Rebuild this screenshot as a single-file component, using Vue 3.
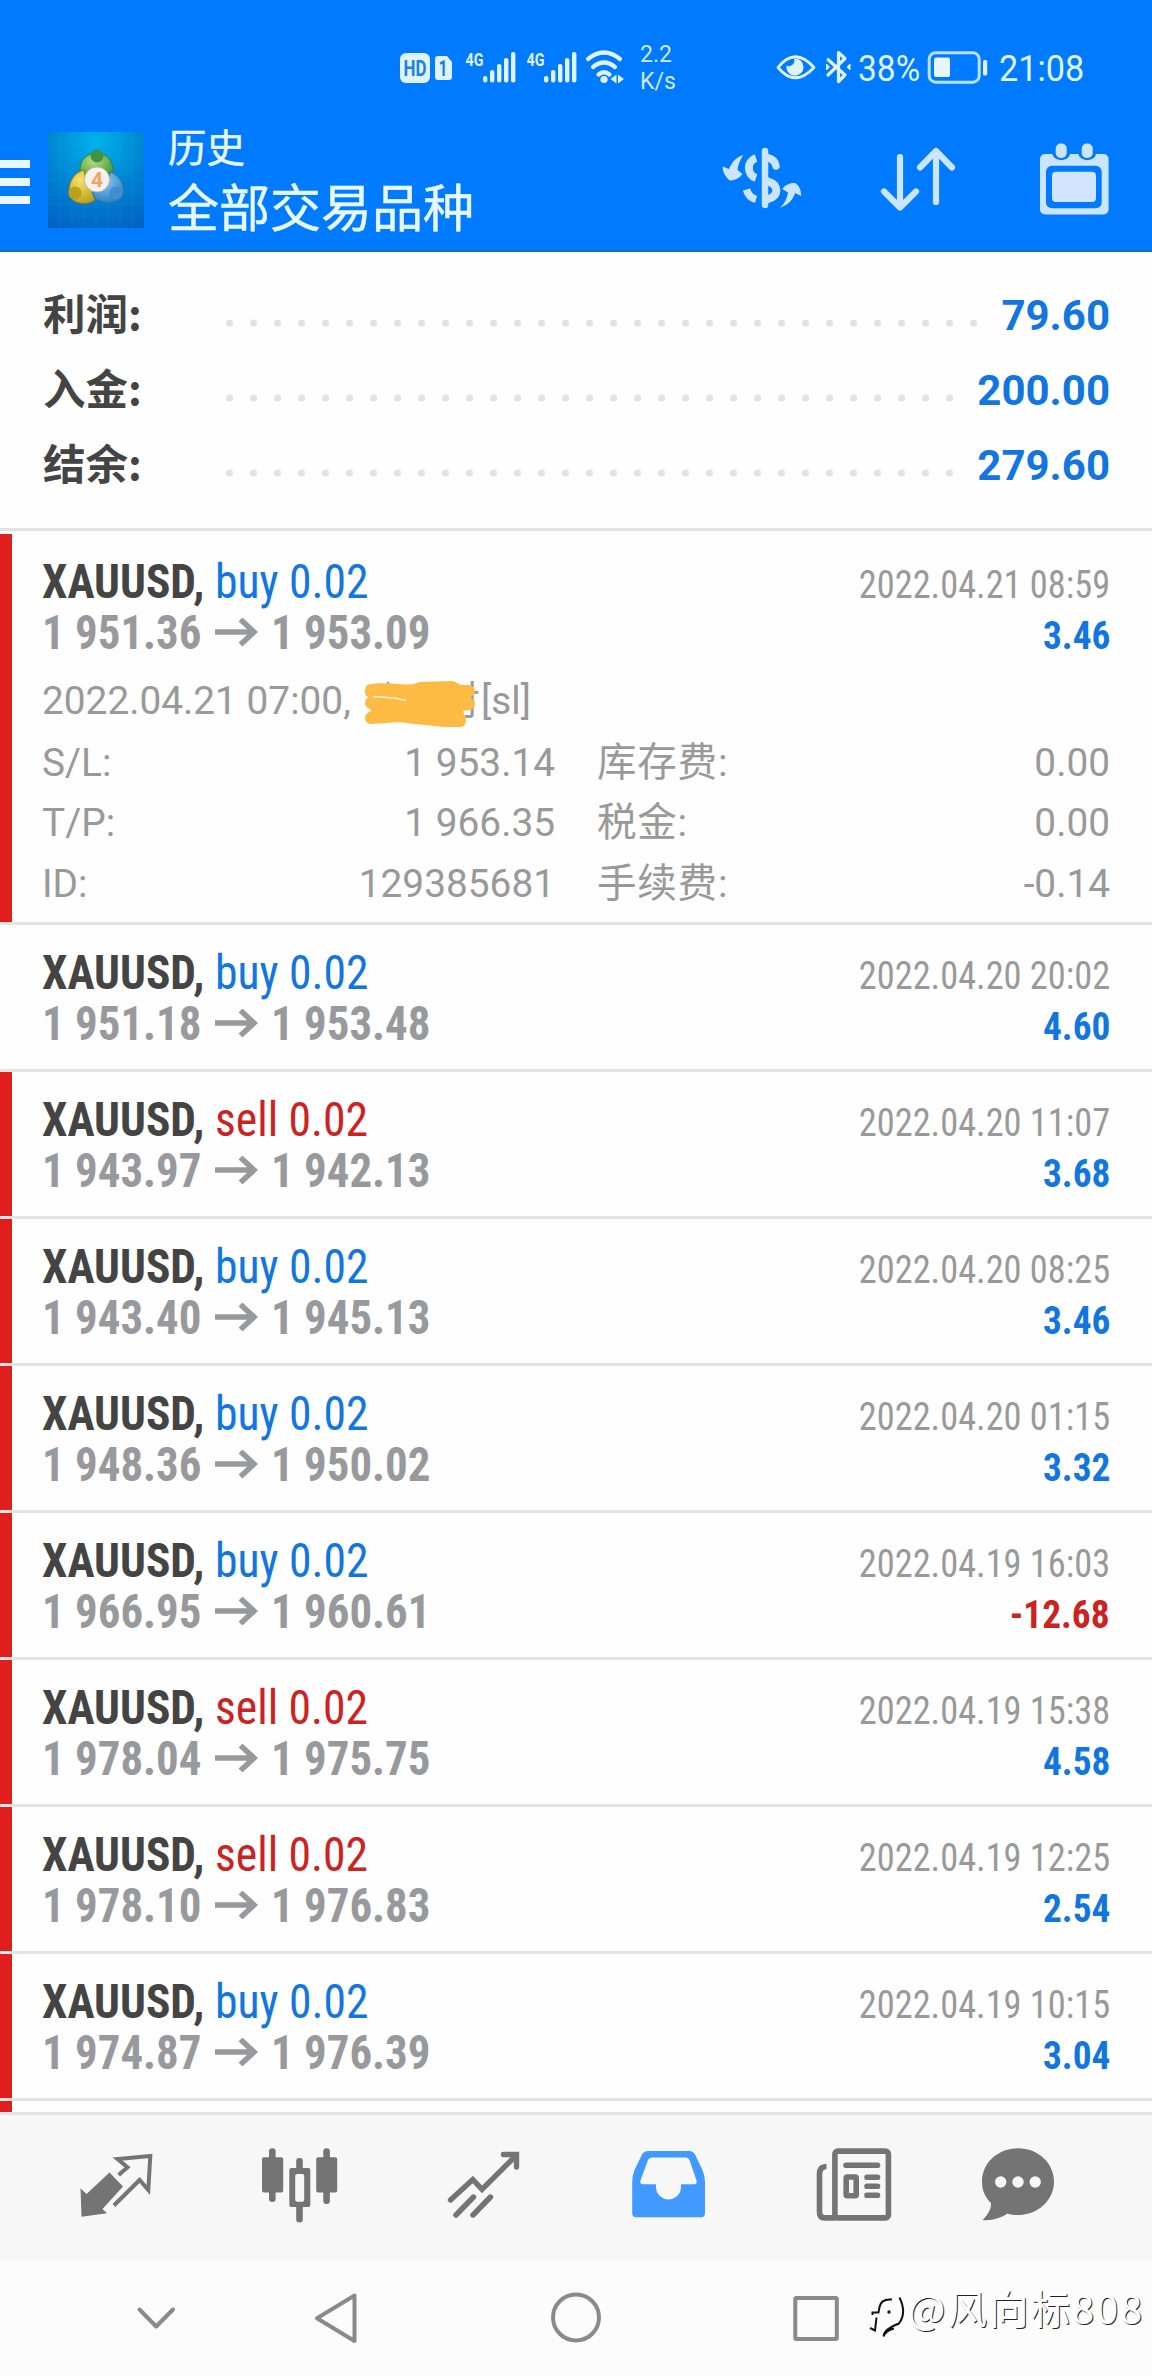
<script setup>
const summary = [
  { label: '利润:', value: '79.60', dots: 32 },
  { label: '入金:', value: '200.00', dots: 31 },
  { label: '结余:', value: '279.60', dots: 31 },
]

const deals = [
  {
    side: 'buy', open: '1 951.36', close: '1 953.09', time: '2022.04.21 08:59', profit: '3.46', marked: true,
    detail: {
      opened: '2022.04.21 07:00,',
      rows: [
        ['S/L:', '1 953.14', '库存费:', '0.00'],
        ['T/P:', '1 966.35', '税金:', '0.00'],
        ['ID:', '129385681', '手续费:', '-0.14'],
      ],
    },
  },
  { side: 'buy', open: '1 951.18', close: '1 953.48', time: '2022.04.20 20:02', profit: '4.60', marked: false },
  { side: 'sell', open: '1 943.97', close: '1 942.13', time: '2022.04.20 11:07', profit: '3.68', marked: true },
  { side: 'buy', open: '1 943.40', close: '1 945.13', time: '2022.04.20 08:25', profit: '3.46', marked: true },
  { side: 'buy', open: '1 948.36', close: '1 950.02', time: '2022.04.20 01:15', profit: '3.32', marked: true },
  { side: 'buy', open: '1 966.95', close: '1 960.61', time: '2022.04.19 16:03', profit: '-12.68', marked: true },
  { side: 'sell', open: '1 978.04', close: '1 975.75', time: '2022.04.19 15:38', profit: '4.58', marked: true },
  { side: 'sell', open: '1 978.10', close: '1 976.83', time: '2022.04.19 12:25', profit: '2.54', marked: true },
  { side: 'buy', open: '1 974.87', close: '1 976.39', time: '2022.04.19 10:15', profit: '3.04', marked: true },
]
</script>

<template>
  <div class="screen">
    <header class="top">
      <div class="status">
        <svg class="st-left" width="230" height="50" viewBox="395 40 230 50" fill="#dff3ff">
          <rect x="400" y="53" width="30" height="30" rx="6" />
          <path d="M438 56h9l5 6v15q0 3-3 3h-11q-3 0-3-3v-18q0-3 3-3z" />
          <text x="403.5" y="75.5" class="hd" textLength="23" lengthAdjust="spacingAndGlyphs">HD</text>
          <text x="438.5" y="75.5" class="hd" textLength="9" lengthAdjust="spacingAndGlyphs">1</text>
          <g v-for="dx in [0, 61]" :key="dx" :transform="`translate(${dx} 0)`">
            <text x="465.5" y="65.5" class="net" textLength="18" lengthAdjust="spacingAndGlyphs">4G</text>
            <rect x="483" y="76" width="4.4" height="6.5" rx="2" />
            <rect x="490" y="70" width="4.4" height="12.5" rx="2" />
            <rect x="497" y="64" width="4.4" height="18.5" rx="2" />
            <rect x="504" y="58" width="4.4" height="24.5" rx="2" />
            <rect x="511" y="52" width="4.4" height="30.5" rx="2" />
          </g>
          <g fill="none" stroke="#dff3ff" stroke-width="4.2" stroke-linecap="round">
            <path d="M588 59Q604 46 620 59" />
            <path d="M593 67Q604 58 615 67" />
            <path d="M598.5 74.5Q604 70 609.5 74.5" />
          </g>
          <circle cx="604" cy="79.5" r="3.6" />
          <path d="M610.5 79l6-4.5v9zM624 79l-6-4.5v9z" />
        </svg>
        <div class="speed"><span>2.2</span><span>K/s</span></div>
        <svg class="st-right" width="76" height="40" viewBox="775 48 76 40" fill="none" stroke="#dff3ff">
          <path d="M778 67.5Q795 46 814 67.5Q795 88 778 67.5Z" stroke-width="2.8" stroke-linejoin="round" />
          <path d="M794 58.5a8.6 8.6 0 1 1-7.5 7a5.5 5.5 0 0 0 7.500 -7z" fill="#dff3ff" stroke="none" />
          <path d="M828 59.500L845 75L838.500 81.500V52.500L845 58.500L828 75" stroke-width="3.2" stroke-linejoin="round" stroke-linecap="round" />
          <path d="M826.500 64v6l3-3zM850 64v6l-3-3z" fill="#dff3ff" stroke="#dff3ff" />
        </svg>
        <span class="pct">38%</span>
        <svg class="batt" width="62" height="34" viewBox="927 50 62 34">
          <rect x="929.2" y="52.700" width="50" height="29.500" rx="6.5" fill="none" stroke="#b9e2ff" stroke-width="3" />
          <rect x="934" y="57.500" width="16" height="19.500" rx="2" fill="#e6f5ff" />
          <rect x="983" y="60" width="4.200" height="15.500" rx="1.500" fill="#dff3ff" />
        </svg>
        <span class="clock">21:08</span>
      </div>
      <div class="bar">
        <div class="burger"><i></i><i></i><i></i></div>
        <svg class="logo" width="96" height="96" viewBox="48 132 96 96">
          <defs>
            <radialGradient id="lg-bg" cx=".5" cy=".1" r="1"><stop offset="0" stop-color="#00b3ec" /><stop offset=".55" stop-color="#0080cf" /><stop offset="1" stop-color="#0062c4" /></radialGradient>
            <radialGradient id="lg-g" cx=".4" cy=".3" r=".8"><stop offset="0" stop-color="#b9dc7d" /><stop offset="1" stop-color="#2f8f36" /></radialGradient>
            <radialGradient id="lg-y" cx=".4" cy=".3" r=".8"><stop offset="0" stop-color="#f7e36a" /><stop offset="1" stop-color="#b99b14" /></radialGradient>
            <radialGradient id="lg-b" cx=".4" cy=".3" r=".8"><stop offset="0" stop-color="#8cc9f2" /><stop offset="1" stop-color="#1c76bd" /></radialGradient>
          </defs>
          <rect x="48" y="132" width="96" height="96" fill="url(#lg-bg)" />
          <path d="M60 132v96M72 132v96M84 132v96M96 132v96M108 132v96M120 132v96M132 132v96M48 144h96M48 156h96M48 168h96M48 180h96M48 192h96M48 204h96M48 216h96" stroke="#3fb4ee" stroke-opacity=".18" stroke-width=".8" />
          <path d="M80 172C79 160 87 153 97 153C107 153 114 161 113 174L106 180L88 176Z" fill="url(#lg-g)" stroke="#3c7d39" />
          <path d="M84 170C73 173 68 183 69 195C72 203 84 206 94 201L97 190L86 180Z" fill="url(#lg-y)" stroke="#8d7d22" />
          <path d="M110 172C119 174 125 184 124 194C121 204 106 206 95 199L92 192L106 187Z" fill="url(#lg-b)" stroke="#2b6ba3" />
          <circle cx="97" cy="156" r="6.500" fill="#439244" />
          <circle cx="75" cy="193" r="6.500" fill="#b9a11b" />
          <circle cx="116" cy="193" r="6.500" fill="#3d8fd0" />
          <circle cx="97" cy="179.500" r="12.500" fill="#f7f1ec" stroke="#b7b09d" stroke-width=".8" />
          <text x="97" y="187" text-anchor="middle" class="four">4</text>
        </svg>
        <div class="titles"><span class="t1">历史</span><span class="t2">全部交易品种</span></div>
        <div class="actions">
          <svg width="84" height="80" viewBox="720 140 84 80" fill="#cce5ff">
            <g fill="none" stroke="#cce5ff" stroke-width="6.500">
              <path d="M765 151V205" stroke-linecap="round" />
              <path d="M756 158C746.500 161 746.500 175 756 178" stroke-width="8" />
              <path d="M746.500 189.500C748 195 751 198 756 199.500" stroke-width="7.500" />
              <path d="M767 157.500C772 158.500 775 161 776 166" stroke-width="7.500" stroke-linecap="round" />
              <path d="M767 181C779.500 185 779.500 196 767 199.500" stroke-width="8" />
            </g>
            <path d="M743.300 155C740 160 738 165 737.500 170L742.500 174C739 179 733 180.500 729.500 180.500C725 176 722.500 172 722.700 166.500L729 169C732 162 736 157 743.300 155Z" />
            <path d="M780 207.700C788 205 793 200 795 193L801.300 196C801 190 799 185 795 183C790 182.500 785 185 782.300 189L788 192.500C787 199 784 204 780 207.700Z" />
          </svg>
          <svg class="sort" width="80" height="80" viewBox="878 140 80 80" fill="none" stroke="#cce5ff" stroke-width="6.200" stroke-linecap="round" stroke-linejoin="round">
            <path d="M900 157V207M884 191.500L900 207.500L916 191.500M936 202V152M920 167.500L936 151L952 167.500" />
          </svg>
          <svg class="cal" width="72" height="80" viewBox="1038 140 72 80" fill="#cce5ff">
            <rect x="1040" y="154" width="68.600" height="60.500" rx="5" />
            <path d="M1052.500 150V154a8.500 6 0 0 0 17.500 0V150zM1078.500 150V154a8.500 6 0 0 0 17.500 0V150z" fill="#007aff" />
            <rect x="1055.700" y="143.500" width="11" height="14.500" rx="5" />
            <rect x="1081.700" y="143.500" width="11" height="14.500" rx="5" />
            <rect x="1046" y="165.700" width="55.700" height="42.600" rx="6" fill="#007aff" />
            <rect x="1052" y="171.700" width="44" height="30.300" rx="4" fill="#d2e5ff" />
          </svg>
        </div>
      </div>
    </header>

    <section class="summary">
      <div v-for="s in summary" :key="s.label" class="sum">
        <span class="sum-label">{{ s.label }}</span>
        <span class="dots"><i v-for="n in s.dots" :key="n"></i></span>
        <span class="sum-value">{{ s.value }}</span>
      </div>
    </section>

    <main class="deals">
      <article v-for="d in deals" :key="d.time" class="deal" :class="{ marked: d.marked, open: d.detail }">
        <div class="line">
          <span class="sym">XAUUSD,</span><span class="side" :class="d.side">{{ d.side }} 0.02</span>
          <span class="time">{{ d.time }}</span>
        </div>
        <div class="line">
          <span class="price">{{ d.open }}</span>
          <svg class="arrow" width="43" height="28" viewBox="0 0 43 28" fill="none" stroke="#98999c" stroke-width="5.5"><path d="M0 14H39M25.500 1.500L39 14L25.500 26.500" /></svg>
          <span class="price">{{ d.close }}</span>
          <span class="profit" :class="{ loss: d.profit[0] === '-' }">{{ d.profit }}</span>
        </div>
        <div v-if="d.detail" class="detail">
          <div class="opened">
            <span>{{ d.detail.opened }}</span>
            <span class="tail">对</span><span class="sl">[sl]</span>
            <svg class="scribble" width="120" height="56" viewBox="360 677 120 56">
              <path d="M380 684l2 2M387 682l3 3M371 709l5 3" stroke="#999" stroke-width="2" />
              <path d="M371 690C385 687 400 692 415 690L420 688L452 687L460 691L469 691L462 697L469 704L455 706L460 721L445 721L415 718L400 716L371 718L388 708L371 703L390 701L371 692Z" fill="#fdbb43" stroke="#fdbb43" stroke-width="12" stroke-linejoin="round" />
              <path d="M373 696.500L394 698L406 700.500" fill="none" stroke="#fff3d6" stroke-width="1.500" />
            </svg>
          </div>
          <div v-for="r in d.detail.rows" :key="r[0]" class="drow">
            <span class="k">{{ r[0] }}</span><span class="v">{{ r[1] }}</span>
            <span class="k2">{{ r[2] }}</span><span class="v2">{{ r[3] }}</span>
          </div>
        </div>
      </article>
      <div class="peek"></div>
    </main>

    <nav class="tabs">
      <svg width="1152" height="145" viewBox="0 2115 1152 145" fill="#747474">
        <path d="M80.500 2188.300L86.500 2194L109.500 2172.500L123 2186.500L102.500 2209L107 2213.300L81.500 2216.700Z" />
        <path d="M118.700 2175L127.500 2167.300L117.500 2159L150.300 2156L148.300 2190L139.600 2180L113.900 2205.500" fill="none" stroke="#747474" stroke-width="4" />
        <g>
          <rect x="269" y="2148.300" width="6.600" height="53.700" rx="3" /><rect x="262" y="2157.300" width="21.200" height="35.200" rx="2" />
          <rect x="323.300" y="2148.300" width="6.600" height="55.700" rx="3" /><rect x="316.200" y="2157.300" width="21" height="35.200" rx="2" />
          <rect x="296.200" y="2158" width="6.600" height="64.500" rx="3" /><rect x="289.300" y="2168" width="21" height="39" rx="2" />
          <rect x="295.200" y="2174" width="9" height="27.700" rx="2" fill="#f7f7f7" />
        </g>
        <path d="M450.500 2200L472.800 2179.500L482 2189.300L516 2155.500M503.500 2154.500H516.500V2167M456 2215L473.500 2197M473 2215L490.500 2197" fill="none" stroke="#747474" stroke-width="5.400" stroke-linecap="round" />
        <path d="M632.200 2213V2182Q632.200 2176 634.500 2170L642 2154.500Q644 2151 648 2151H689.500Q693 2151 695 2154.500L702.500 2170Q705 2176 705 2182V2213Q705 2217.300 701 2217.300H636Q632.200 2217.300 632.200 2213ZM652 2157.500Q649 2157.500 648 2160L640.500 2180.500Q639.500 2184.300 643 2184.300H656V2187A12.400 12.400 0 0 0 681 2187V2184.300H694Q697.500 2184.300 696.500 2180.500L689.500 2160Q688.500 2157.500 686 2157.500Z" fill="#419aff" fill-rule="evenodd" />
        <g fill="none" stroke="#747474" stroke-width="5.600">
          <rect x="834.900" y="2151.100" width="53.500" height="66.800" rx="3" />
          <path d="M826.500 2166.500Q819.500 2166.500 819.500 2174V2212Q819.500 2217.900 825 2217.900H836" />
          <path d="M846 2165.300H877.500M867 2177.300H877.500M867 2186.300H877.500M867 2195.300H877.500" stroke-linecap="round" />
          <rect x="846.200" y="2177" width="10" height="18.700" rx="1" />
        </g>
        <path d="M1018 2148.300C1038 2148.300 1054 2163 1054 2181.700C1054 2200 1038 2215 1018 2215C1014 2215 1010 2214.500 1007.500 2213.500C1001 2218 992 2221 982.500 2220C988 2215 991.500 2208 991 2203C985 2197.500 982 2190 982 2181.700C982 2163 998 2148.300 1018 2148.300Z" />
        <g fill="#f7f7f7"><circle cx="1000.700" cy="2182" r="5.700" /><circle cx="1018" cy="2182" r="5.700" /><circle cx="1035.200" cy="2182" r="5.700" /></g>
      </svg>
    </nav>

    <footer class="sysnav">
      <svg width="720" height="116" viewBox="130 2260 720 116" fill="none" stroke="#8a8a8a" stroke-width="4" stroke-linejoin="round" stroke-linecap="round">
        <path d="M139.500 2309.500L156.200 2326.500L173 2309.500" />
        <path d="M317 2318.300L354.500 2295.500V2341Z" />
        <circle cx="576" cy="2317.500" r="23" />
        <rect x="795.300" y="2298" width="41.500" height="41" rx="1" />
      </svg>
      <div class="mark">
        <svg width="40" height="46" viewBox="868 2295 40 46" fill="none" stroke="#111" stroke-width="2">
          <path d="M892 2299.500Q881 2298.500 879.500 2307L878.500 2312.500H872.500V2315M876.500 2317.500L875 2330.500L870 2328" />
          <path d="M899.500 2297.500Q907 2313 899 2323.500Q884 2329 883.500 2336.500Q885 2331 894 2328.500" />
          <circle cx="889" cy="2312" r=".7" />
        </svg>
        <span>@风向标808</span>
      </div>
    </footer>
  </div>
</template>

<style>
body { margin: 0; background: #fff; }
</style>

<style scoped>
.screen { width: 1152px; height: 2376px; overflow: hidden; display: flex; flex-direction: column; background: #fefefe; font-family: Roboto, "Noto Sans CJK SC", sans-serif; white-space: nowrap; }
svg { display: block; flex: none; }
.top { height: 252px; box-sizing: border-box; background: #007aff; border-bottom: 2px solid #1a6cc8; color: #e6f8ff; flex: none; }
.status { height: 110px; display: flex; align-items: flex-start; padding-left: 395px; }
.st-left { margin-top: 40px; }
.hd { font: 700 22px Roboto, sans-serif; fill: #1d7fe6; }
.net { font: 700 18px Roboto, sans-serif; }
.speed { width: 36px; margin: 41px 0 0 15px; display: flex; flex-direction: column; font-size: 23px; line-height: 27px; color: #cfeaff; }
.st-right { margin: 48px 0 0 99px; }
.pct, .clock { font-size: 36px; line-height: 40px; margin-top: 49px; color: #dff3ff; transform-origin: left; }
.pct { width: 69px; margin-left: 7px; transform: scaleX(.93); }
.batt { margin-top: 50px; }
.clock { margin-left: 10px; transform: scaleX(.95); }
.bar { height: 140px; display: flex; align-items: flex-start; }
.burger { width: 30px; margin: 50px 18px 0 0; display: flex; flex-direction: column; gap: 10px; }
.burger i { height: 8px; background: #e9f6ff; }
.logo { margin-top: 22px; }
.four { font: 700 21px Roboto, sans-serif; fill: #f0a45c; }
.titles { margin: 13px 0 0 24px; width: 320px; display: flex; flex-direction: column; font-family: "Noto Sans CJK SC", sans-serif; -webkit-text-stroke: .5px #e6f8ff; }
.t1 { font-size: 38.4px; line-height: 44px; }
.t2 { font-size: 51px; line-height: 76px; }
.actions { margin: 30px 0 0 232px; display: flex; }
.sort { margin-left: 74px; }
.cal { margin-left: 80px; }

.summary { height: 279px; box-sizing: border-box; border-bottom: 3px solid #e2e2e2; padding: 22px 42px 0 43px; flex: none; }
.sum { height: 75px; display: flex; align-items: baseline; line-height: 75px; font-size: 42px; font-weight: 700; color: #444; }
.sum-label { width: 183px; font-family: "Noto Sans CJK SC", sans-serif; font-size: 42.5px; }
.dots { display: flex; gap: 17px; transform: translateY(-3.5px); }
.dots i { width: 7px; height: 7px; border-radius: 50%; background: #e2e2e2; }
.sum-value { margin-left: auto; color: #1276e0; }

.deals { flex: none; height: 1578px; padding-top: 3px; overflow: hidden; }
.deal { height: 147px; box-sizing: border-box; border-bottom: 3px solid #e4e4e4; padding: 21.5px 42px 0 42px; background: #fefefe; position: relative; }
.deal.open { height: 391px; }
.marked::before { content: ""; position: absolute; left: 0; top: 0; bottom: 0; width: 12px; background: #e01e1e; }
.line { height: 51px; line-height: 51px; display: flex; align-items: baseline; font-stretch: 75%; font-size: 48px; }
.sym { width: 172.5px; font-weight: 700; color: #444; transform: scaleX(.945); transform-origin: left; }
.side { transform: scaleX(.95); transform-origin: left; }
.buy { color: #1276e0; }
.sell { color: #cc2222; }
.time { margin-left: auto; font-size: 39.5px; color: #999; transform: scaleX(.92); transform-origin: right; }
.price { width: 173px; font-weight: 700; color: #98999c; transform: scaleX(.935); transform-origin: left; }
.arrow { margin-right: 13px; align-self: center; }
.profit { margin-left: auto; font-size: 39.5px; font-weight: 700; color: #1276e0; transform: scaleX(.945); transform-origin: right; }
.loss { color: #cc2222; }
.detail { margin-top: 13.5px; font-size: 38.8px; line-height: 60.400px; color: #999; }
.opened { height: 62px; display: flex; position: relative; }
.opened .tail { position: absolute; left: 399px; top: 0; }
.opened .sl { position: absolute; left: 439px; top: 0; }
.scribble { position: absolute; left: 318px; top: 6px; }
.drow { height: 60.300px; display: flex; }
.k { width: 200px; }
.v { width: 313px; text-align: right; }
.k2 { margin-left: 42px; font-size: 39.500px; letter-spacing: .8px; }
.v2 { margin-left: auto; }
.peek { height: 11px; width: 12px; background: #e01e1e; }

.tabs { height: 148px; box-sizing: border-box; border-top: 3px solid #e4e4e4; background: #f7f7f7; flex: none; }
.sysnav { height: 116px; display: flex; background: #fcfcfc; padding-left: 130px; flex: none; }
.mark { display: flex; margin-left: 18px; padding-top: 35px; font-family: "Noto Sans CJK SC", sans-serif; font-size: 39.5px; letter-spacing: 2.1px; color: #fff; text-shadow: 1px 1px 0 #222; }
.mark span { margin-left: 0; line-height: 40px; margin-top: -8px; }
</style>
